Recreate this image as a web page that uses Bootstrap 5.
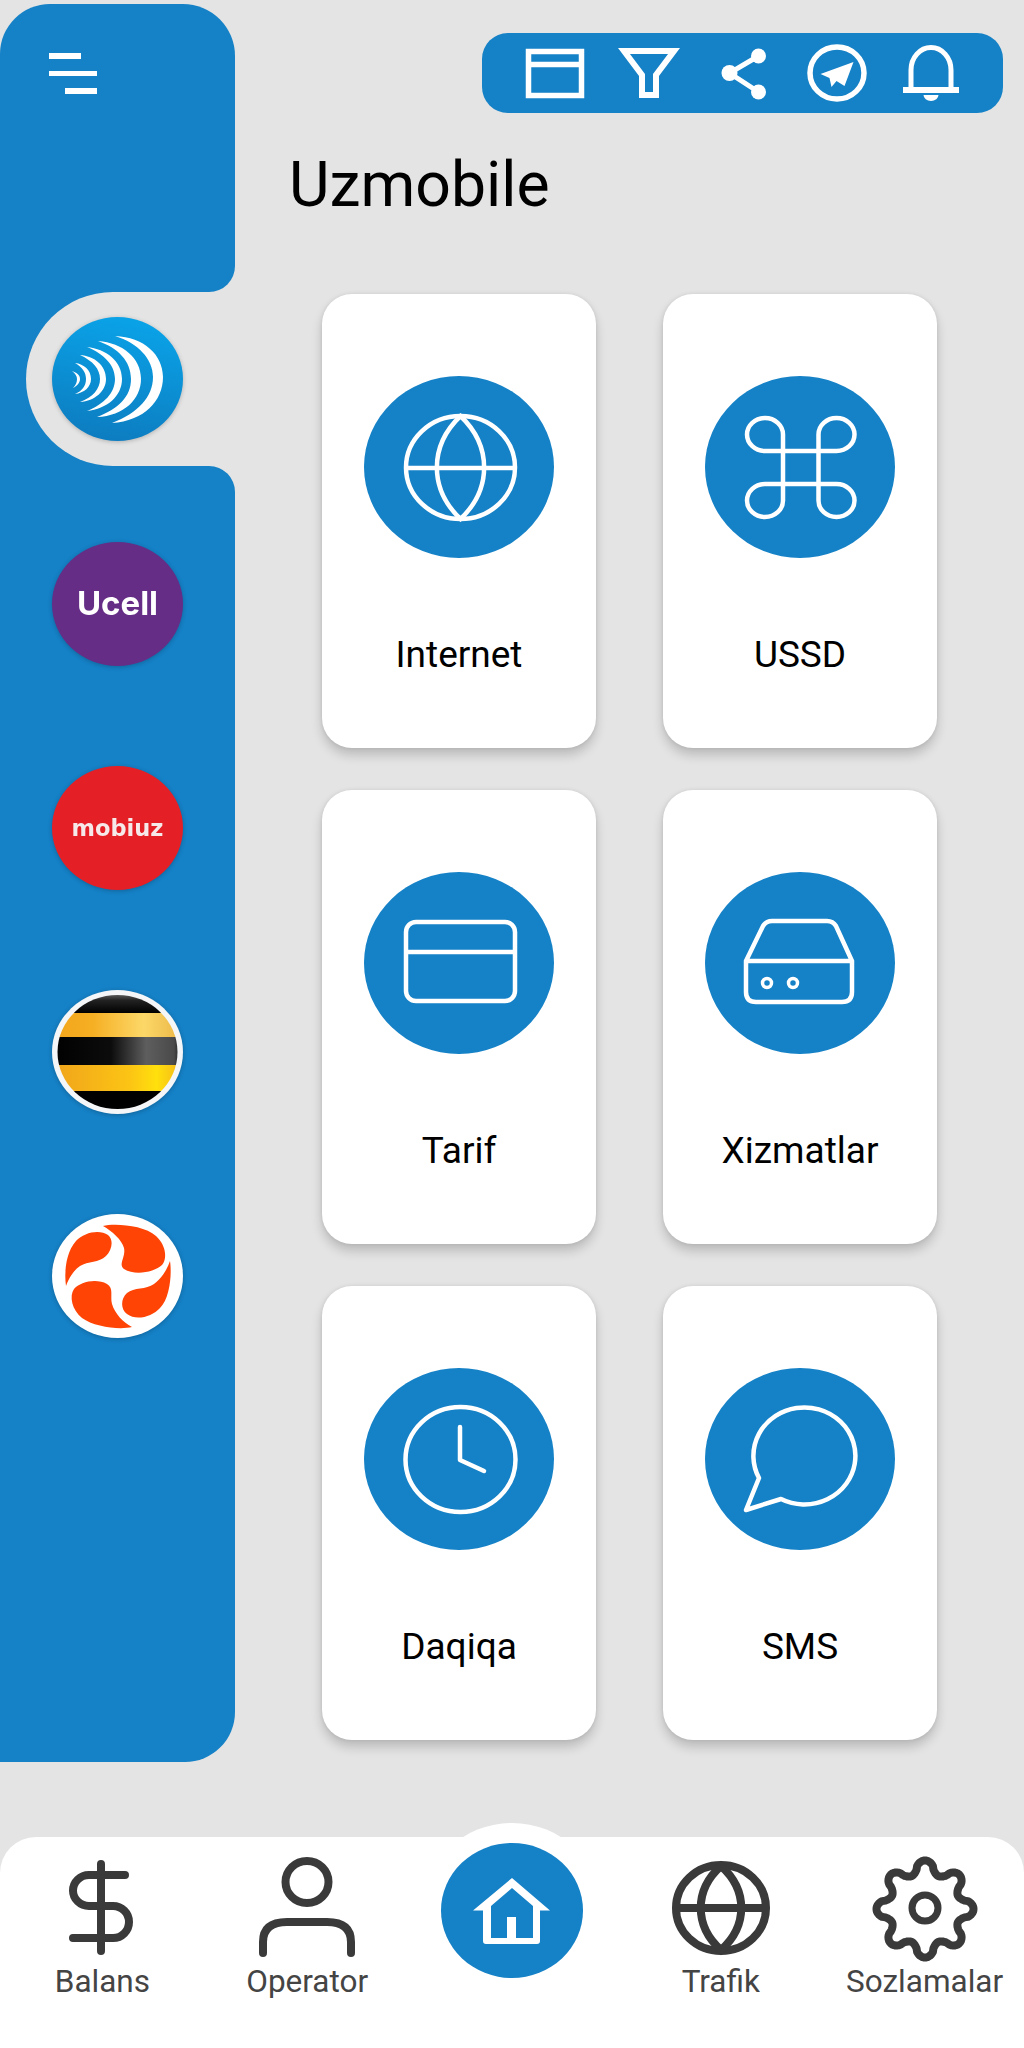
<!DOCTYPE html>
<html lang="en">
<head>
  <meta charset="UTF-8">
  <meta name="viewport" content="width=device-width, initial-scale=1.0">
  <title>Uzmobile</title>
  <link rel="stylesheet" href="https://cdn.jsdelivr.net/npm/bootstrap@5.3.0/dist/css/bootstrap.min.css">
  <style>
    :root { --brand: #1581c6; --page: #e4e4e4; }
    body { background: var(--page); font-family: Roboto, "Liberation Sans", sans-serif; color: #000; height: 2048px; overflow: hidden; padding-top: 4px; }
    .stage { height: 1758px; }

    .side-rail { width: 235px; flex: none; }
    .rail-top { height: 288px; background: var(--brand); border-radius: 50px 52px 26px 0; padding: 49px 0 0 49px; }
    .rail-notch { height: 174px; background: var(--brand); }
    .notch-inner { height: 100%; margin-left: 26px; background: var(--page); border-radius: 87px 0 0 87px; padding: 25px 0 0 26px; }
    .rail-rest { height: 1296px; background: var(--brand); border-radius: 0 26px 50px 0; padding: 76px 0 0 52px; gap: 100px; }
    .burger span { display: block; height: 5.5px; background: #fff; margin-bottom: 12px; width: 48px; }
    .burger span:first-child { width: 32px; }
    .burger span:last-child { width: 32px; margin-left: 16px; }
    .op-logo { width: 131px; height: 124px; display: block; filter: drop-shadow(0 1px 2px rgba(0,0,0,.22)); }
    .logo-ucell { font-family: Inter, "Liberation Sans", sans-serif; font-weight: 700; font-size: 33px; }
    .logo-mobi { font-family: "DejaVu Sans", sans-serif; font-weight: 700; font-size: 22.5px; }

    .main-area { padding-top: 29px; }
    .tool-pill { width: 521px; height: 80px; margin-left: 247px; background: var(--brand); border-radius: 26px; padding-left: 41px; gap: 30px; }
    .tool-pill svg { width: 64px; height: 60px; flex: none; }
    .screen-title { font-size: 62.5px; line-height: 70px; font-weight: 400; margin: 37px 0 0 54px; }
    .tile-grid { display: grid; grid-template-columns: 274px 274px; column-gap: 67px; row-gap: 42px; margin: 74px 0 0 87px; }
    .tile { height: 454px; background: #fff; border-radius: 30px; box-shadow: 0 7px 11px rgba(0,0,0,.18), 0 0 4px rgba(0,0,0,.08); padding-top: 82px; }
    .tile svg { width: 190px; height: 182px; display: block; margin-left: 42px; }
    .tile-name { font-size: 37px; line-height: 40px; text-align: center; margin-top: 77px; }

    .tab-bar { height: 211px; margin-top: 75px; background: #fff; border-radius: 36px 36px 0 0; position: relative; }
    .home-bump { position: absolute; left: 422px; top: -14px; width: 180px; height: 174px; border-radius: 50%; background: #fff; }
    .home-disc { position: absolute; left: 441px; top: 6px; width: 142px; height: 135px; border-radius: 50%; background: var(--brand); }
    .home-disc svg { width: 142px; height: 135px; display: block; }
    .tab-cell { width: 204.8px; padding-top: 18px; position: relative; }
    .tab-cell svg { width: 120px; height: 108px; display: block; }
    .tab-name { font-size: 31.5px; line-height: 34px; color: #444; margin-top: 2px; white-space: nowrap; }
    .tab-shift { left: 4px; }
    .tab-shift-lg { left: 3px; }
  </style>
</head>
<body>
  <div class="stage d-flex">
    <aside class="side-rail d-flex flex-column">
      <div class="rail-top">
        <div class="burger"><span></span><span></span><span></span></div>
      </div>
      <div class="rail-notch">
        <div class="notch-inner">
          <svg class="op-logo" viewBox="0 0 131 124">
            <defs><linearGradient id="uz" x1="0.6" y1="0" x2="0.4" y2="1"><stop offset="0" stop-color="#0aa3e8"/><stop offset="1" stop-color="#0d7cc0"/></linearGradient></defs>
            <ellipse cx="65.5" cy="62" rx="65.5" ry="62" fill="url(#uz)"/>
            <g fill="#fff">
              <path d="M63 19C92 20 111 38 111 60C111 84 92 104 60 106C86 96 101 80 101 60C101 42 86 26 63 19Z"/>
              <path d="M46 24C71 26 89 41 89 62C89 82 72 99 45 100C66 92 79 80 79 62C79 44 66 31 46 24Z"/>
              <path d="M35 30C54 32 70 44 70 62C70 79 55 92 35 94C52 87 63 76 63 62C63 48 52 37 35 30Z"/>
              <path d="M28 38C42 39 54 48 54 62C54 74 43 84 28 85C41 80 48 72 48 62C48 52 41 44 28 38Z"/>
              <path d="M23 46C32 47 39 53 39 62C39 70 32 76 23 77C30 74 34 69 34 62C34 55 30 50 23 46Z"/>
              <path d="M20 54C25 56 28 58 28 62C28 66 25 69 21 71C24 68 25 65 25 62C25 59 23 56 20 54Z"/>
            </g>
          </svg>
        </div>
      </div>
      <div class="rail-rest d-flex flex-column">
        <svg class="op-logo" viewBox="0 0 131 124">
          <ellipse cx="65.5" cy="62" rx="65.5" ry="62" fill="#652d86"/>
          <text class="logo-ucell" x="65.5" y="73" text-anchor="middle" fill="#fff">Ucell</text>
        </svg>
        <svg class="op-logo" viewBox="0 0 131 124">
          <ellipse cx="65.5" cy="62" rx="65.5" ry="62" fill="#e51f26"/>
          <text class="logo-mobi" x="65.5" y="70" text-anchor="middle" fill="#f6e9e9">mobiuz</text>
        </svg>
        <svg class="op-logo" viewBox="0 0 131 124">
          <defs>
            <clipPath id="bee"><ellipse cx="65.5" cy="62" rx="60" ry="57"/></clipPath>
            <linearGradient id="beeTop" x1="0" y1="0" x2="0" y2="1"><stop offset="0" stop-color="#8a8a8a"/><stop offset=".45" stop-color="#222"/><stop offset="1" stop-color="#000"/></linearGradient>
            <linearGradient id="beeY" x1="0" y1="0" x2="1" y2="0"><stop offset="0" stop-color="#f2a51c"/><stop offset=".3" stop-color="#f6ae22"/><stop offset=".7" stop-color="#fcd868"/><stop offset="1" stop-color="#eab545"/></linearGradient>
            <linearGradient id="beeZ" x1="0" y1="0" x2="1" y2="0"><stop offset="0" stop-color="#f0a31c"/><stop offset=".6" stop-color="#fcc514"/><stop offset=".8" stop-color="#ffe00c"/><stop offset="1" stop-color="#f3b51c"/></linearGradient>
            <linearGradient id="beeK" x1="0" y1="0" x2="1" y2="0"><stop offset="0" stop-color="#000"/><stop offset=".45" stop-color="#0c0c0c"/><stop offset=".72" stop-color="#5e5e5e"/><stop offset=".93" stop-color="#4a4a4a"/><stop offset="1" stop-color="#111"/></linearGradient>
          </defs>
          <ellipse cx="65.5" cy="62" rx="65.5" ry="62" fill="#f4f6f8"/>
          <g clip-path="url(#bee)">
            <rect x="0" y="0" width="131" height="23" fill="url(#beeTop)"/>
            <rect x="0" y="23" width="131" height="24" fill="url(#beeY)"/>
            <rect x="0" y="47" width="131" height="28" fill="url(#beeK)"/>
            <rect x="0" y="75" width="131" height="26" fill="url(#beeZ)"/>
            <rect x="0" y="101" width="131" height="23" fill="#000"/>
          </g>
        </svg>
        <svg class="op-logo" viewBox="0 0 131 124">
          <ellipse cx="65.5" cy="62" rx="65.5" ry="62" fill="#fff"/>
          <g fill="#ff4405">
            <path d="M51 12C62 9 92 11 104 22C115 32 115 46 110 51C103 58 83 62 72 55C66 50 74 43 72 34C70 26 60 17 51 12Z"/>
            <path d="M14 72C12 58 14 38 24 27C32 18 48 15 56 21C62 26 60 36 54 42C47 49 36 47 28 52C21 57 17 64 14 72Z"/>
            <path d="M118 47C120 60 118 84 108 94C100 103 84 107 75 100C68 95 69 84 75 79C82 73 94 76 102 70C109 65 115 56 118 47Z"/>
            <path d="M80 113C68 116 42 113 30 104C20 96 17 82 22 75C28 68 44 64 55 70C62 74 58 82 60 90C63 100 71 108 80 113Z"/>
          </g>
        </svg>
      </div>
    </aside>

    <main class="main-area flex-grow-1">
      <div class="tool-pill d-flex align-items-center">
        <svg viewBox="0 0 64 60" fill="none" stroke="#fff" stroke-width="5.5">
          <rect x="5.5" y="8.5" width="53" height="44"/><path d="M5 21.5H59"/>
        </svg>
        <svg viewBox="0 0 64 60" fill="none" stroke="#fff" stroke-width="6">
          <path d="M7 8H57L39 32V52H25V32Z"/>
        </svg>
        <svg viewBox="0 0 64 60" fill="#fff" stroke="#fff">
          <path d="M47.5 13L18.5 30L47.5 49" fill="none" stroke-width="5"/>
          <circle cx="47.5" cy="13" r="7.5" stroke="none"/><circle cx="18.5" cy="30" r="8" stroke="none"/><circle cx="47.5" cy="49" r="7.5" stroke="none"/>
        </svg>
        <svg viewBox="0 0 64 60" fill="none" stroke="#fff" stroke-width="5.5">
          <ellipse cx="32" cy="30" rx="27" ry="26"/>
          <path d="M48.5 19L15.5 31L24.5 35L26.5 44L31.5 38L39.5 43Z" fill="#fff" stroke="none"/>
        </svg>
        <svg viewBox="0 0 64 60" fill="none" stroke="#fff" stroke-width="5">
          <path d="M12 46V27A20 22.5 0 0 1 52 27V46"/>
          <rect x="4" y="44" width="56" height="6" fill="#fff" stroke="none"/>
          <path d="M24.5 52H39.5A7.5 6 0 0 1 24.5 52Z" fill="#fff" stroke="none"/>
        </svg>
      </div>
      <h1 class="screen-title">Uzmobile</h1>

      <div class="tile-grid">
        <div class="tile">
          <svg viewBox="0 0 190 182" fill="none" stroke="#fff" stroke-width="4.5">
            <ellipse cx="95" cy="91" rx="95" ry="91" fill="#1581c6" stroke="none"/>
            <ellipse cx="96.5" cy="91.5" rx="54.5" ry="51.5"/>
            <path d="M42 92H151M96.5 40C65 70 65 113 96.5 143C128 113 128 70 96.5 40Z"/>
          </svg>
          <div class="tile-name">Internet</div>
        </div>
        <div class="tile">
          <svg viewBox="0 0 190 182" fill="none" stroke="#fff" stroke-width="4.5">
            <ellipse cx="95" cy="91" rx="95" ry="91" fill="#1581c6" stroke="none"/>
            <path d="M78 58.5A18 16.5 0 1 0 60 75H131.5A18 16.5 0 1 0 113.5 58.5V124.5A18 16.5 0 1 0 131.5 108H60A18 16.5 0 1 0 78 124.5Z"/>
          </svg>
          <div class="tile-name">USSD</div>
        </div>
        <div class="tile">
          <svg viewBox="0 0 190 182" fill="none" stroke="#fff" stroke-width="4.5">
            <ellipse cx="95" cy="91" rx="95" ry="91" fill="#1581c6" stroke="none"/>
            <rect x="42" y="50" width="109" height="79" rx="10"/><path d="M42 80H151"/>
          </svg>
          <div class="tile-name">Tarif</div>
        </div>
        <div class="tile">
          <svg viewBox="0 0 190 182" fill="none" stroke="#fff" stroke-width="4.5">
            <ellipse cx="95" cy="91" rx="95" ry="91" fill="#1581c6" stroke="none"/>
            <path d="M41 89L58 54Q61 49 67 49H122Q128 49 131 54L147 89V120Q147 130 137 130H51Q41 130 41 120ZM41 89H147"/>
            <ellipse cx="62" cy="111" rx="4.5" ry="4.5" stroke-width="3.5"/><ellipse cx="88" cy="111" rx="4.5" ry="4.5" stroke-width="3.5"/>
          </svg>
          <div class="tile-name">Xizmatlar</div>
        </div>
        <div class="tile">
          <svg viewBox="0 0 190 182" fill="none" stroke="#fff" stroke-width="4.5">
            <ellipse cx="95" cy="91" rx="95" ry="91" fill="#1581c6" stroke="none"/>
            <ellipse cx="96.5" cy="91.5" rx="55" ry="52.5"/>
            <path d="M96 59V92L120 103" stroke-linecap="round" stroke-linejoin="round"/>
          </svg>
          <div class="tile-name">Daqiqa</div>
        </div>
        <div class="tile">
          <svg viewBox="0 0 190 182" fill="none" stroke="#fff" stroke-width="4.5" stroke-linejoin="round">
            <ellipse cx="95" cy="91" rx="95" ry="91" fill="#1581c6" stroke="none"/>
            <path d="M76 131L41 142L54 110A51 48.5 0 1 1 76 131Z"/>
          </svg>
          <div class="tile-name">SMS</div>
        </div>
      </div>
    </main>
  </div>

  <nav class="tab-bar d-flex">
    <div class="home-bump"></div>
    <div class="tab-cell d-flex flex-column align-items-center">
      <svg viewBox="0 0 120 108" fill="none" stroke="#3a3a3a" stroke-width="8" stroke-linecap="round">
        <path d="M59 9V96M83 20H47A16 15.5 0 0 0 47 51H71A16 16 0 0 1 71 83H31"/>
      </svg>
      <div class="tab-name">Balans</div>
    </div>
    <div class="tab-cell d-flex flex-column align-items-center">
      <svg viewBox="0 0 120 108" fill="none" stroke="#3a3a3a" stroke-width="8" stroke-linecap="round">
        <ellipse cx="60" cy="27" rx="21.5" ry="21"/>
        <path d="M16 98V87Q16 67 40 67H80Q104 67 104 87V98"/>
      </svg>
      <div class="tab-name">Operator</div>
    </div>
    <div class="tab-cell"></div>
    <div class="tab-cell tab-shift d-flex flex-column align-items-center">
      <svg viewBox="0 0 120 108" fill="none" stroke="#3a3a3a" stroke-width="8">
        <ellipse cx="60" cy="53" rx="45" ry="43"/>
        <path d="M15 53H105M60 11C33 35 33 71 60 95C87 71 87 35 60 11Z"/>
      </svg>
      <div class="tab-name">Trafik</div>
    </div>
    <div class="tab-cell tab-shift-lg d-flex flex-column align-items-center">
      <svg viewBox="0 0 120 108" fill="none" stroke="#3a3a3a" stroke-width="8">
        <path id="gearPath" stroke-linejoin="round"/>
        <circle cx="60" cy="53" r="13" stroke-width="7"/>
      </svg>
      <div class="tab-name">Sozlamalar</div>
    </div>
    <div class="home-disc">
      <svg viewBox="0 0 142 135" fill="none">
        <path d="M71 35L32 67.5H42V98Q42 101 45 101H96Q99 101 99 98V67.5H109Z" fill="#fff"/>
        <path d="M71 45L50 63V95H66V74H75V95H92V63Z" fill="#1581c6"/>
      </svg>
    </div>
  </nav>

  <script src="https://cdn.jsdelivr.net/npm/bootstrap@5.3.0/dist/js/bootstrap.bundle.min.js"></script>
  <script>
    // wavy 8-tooth outline for the settings gear
    const pts = [];
    for (let i = 0; i < 240; i++) {
      const a = i / 240 * Math.PI * 2 - Math.PI / 2;
      const w = Math.cos(8 * (a + Math.PI / 2));
      const r = 42 + 6.5 * Math.sign(w) * Math.pow(Math.abs(w), 0.65);
      pts.push((60 + r * Math.cos(a)).toFixed(1) + " " + (54 + r * Math.sin(a)).toFixed(1));
    }
    document.getElementById("gearPath").setAttribute("d", "M" + pts.join("L") + "Z");
  </script>
</body>
</html>
